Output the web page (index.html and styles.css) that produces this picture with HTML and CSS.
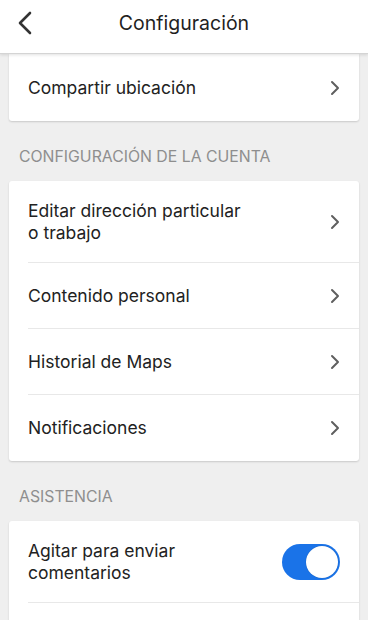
FILE: index.html
```html
<!DOCTYPE html>
<html lang="es">
<head>
<meta charset="utf-8">
<link rel="stylesheet" href="styles.css">
</head>
<body>
<header class="topbar">
  <svg class="back" width="16" height="24" viewBox="0 0 16 24"><path d="M13 2 L3 12 L13 22" fill="none" stroke="#333" stroke-width="2.6" stroke-linecap="round" stroke-linejoin="round"/></svg>
  <h1 class="title">Configuración</h1>
</header>
<main class="content">
  <section class="card card-first">
    <div class="row">
      <span class="label">Compartir ubicación</span>
      <svg class="chev" width="10" height="16" viewBox="0 0 10 16"><path d="M2 2 L8 8 L2 14" fill="none" stroke="#5f5f5f" stroke-width="2" stroke-linecap="round" stroke-linejoin="round"/></svg>
    </div>
  </section>
  <h2 class="section">Configuración de la cuenta</h2>
  <section class="card">
    <div class="row tall">
      <span class="label">Editar dirección particular<br>o trabajo</span>
      <svg class="chev" width="10" height="16" viewBox="0 0 10 16"><path d="M2 2 L8 8 L2 14" fill="none" stroke="#5f5f5f" stroke-width="2" stroke-linecap="round" stroke-linejoin="round"/></svg>
    </div>
    <div class="row">
      <span class="label">Contenido personal</span>
      <svg class="chev" width="10" height="16" viewBox="0 0 10 16"><path d="M2 2 L8 8 L2 14" fill="none" stroke="#5f5f5f" stroke-width="2" stroke-linecap="round" stroke-linejoin="round"/></svg>
    </div>
    <div class="row">
      <span class="label">Historial de Maps</span>
      <svg class="chev" width="10" height="16" viewBox="0 0 10 16"><path d="M2 2 L8 8 L2 14" fill="none" stroke="#5f5f5f" stroke-width="2" stroke-linecap="round" stroke-linejoin="round"/></svg>
    </div>
    <div class="row last">
      <span class="label">Notificaciones</span>
      <svg class="chev" width="10" height="16" viewBox="0 0 10 16"><path d="M2 2 L8 8 L2 14" fill="none" stroke="#5f5f5f" stroke-width="2" stroke-linecap="round" stroke-linejoin="round"/></svg>
    </div>
  </section>
  <h2 class="section">Asistencia</h2>
  <section class="card">
    <div class="row tall">
      <span class="label">Agitar para enviar<br>comentarios</span>
      <span class="toggle"><span class="knob"></span></span>
    </div>
    <div class="row"></div>
  </section>
</main>
</body>
</html>
```
FILE: styles.css
```css
* { box-sizing: border-box; }
html, body { margin: 0; padding: 0; }
body {
  width: 368px;
  height: 620px;
  overflow: hidden;
  background: #efefef;
  font-family: Inter, "Liberation Sans", Arial, sans-serif;
  color: #222222;
}
.topbar {
  position: relative;
  z-index: 2;
  height: 54px;
  background: #ffffff;
  border-bottom: 1px solid #d4d4d4;
  box-shadow: 0 1px 3px rgba(0,0,0,0.12);
  display: flex;
  justify-content: center;
}
.back {
  position: absolute;
  left: 17px;
  top: 11px;
}
.title {
  margin: 0;
  height: 46px;
  line-height: 46px;
  font-size: 19.5px;
  font-weight: 400;
  color: #1f1f1f;
}
.content {
  padding: 0 9px;
}
.card {
  background: #ffffff;
  border-radius: 3px;
  box-shadow: 0 1px 2px rgba(0,0,0,0.16);
  overflow: hidden;
}
.card-first {
  border-top-left-radius: 0;
  border-top-right-radius: 0;
}
.row {
  display: flex;
  align-items: center;
  justify-content: space-between;
  margin-left: 19px;
  padding-right: 19px;
  height: 66px;
  border-bottom: 1px solid #e8e8e8;
}
.row.tall { height: 82px; }
.card-first .row { height: 67px; }
.row.last, .card-first .row { border-bottom: none; }
.label {
  font-size: 17.5px;
  line-height: 22px;
  color: #222222;
}
.chev { flex: none; }
.section {
  margin: 0;
  height: 60px;
  padding: 26px 0 0 10px;
  font-size: 15.8px;
  line-height: 20px;
  font-weight: 400;
  text-transform: uppercase;
  color: #8e8e8e;
}
.toggle {
  flex: none;
  position: relative;
  width: 58px;
  height: 36px;
  border-radius: 18px;
  background: #1a73e8;
}
.knob {
  position: absolute;
  right: 2px;
  top: 2px;
  width: 32px;
  height: 32px;
  border-radius: 50%;
  background: #ffffff;
  box-shadow: 0 0 1px rgba(0,0,0,0.3);
}
```
